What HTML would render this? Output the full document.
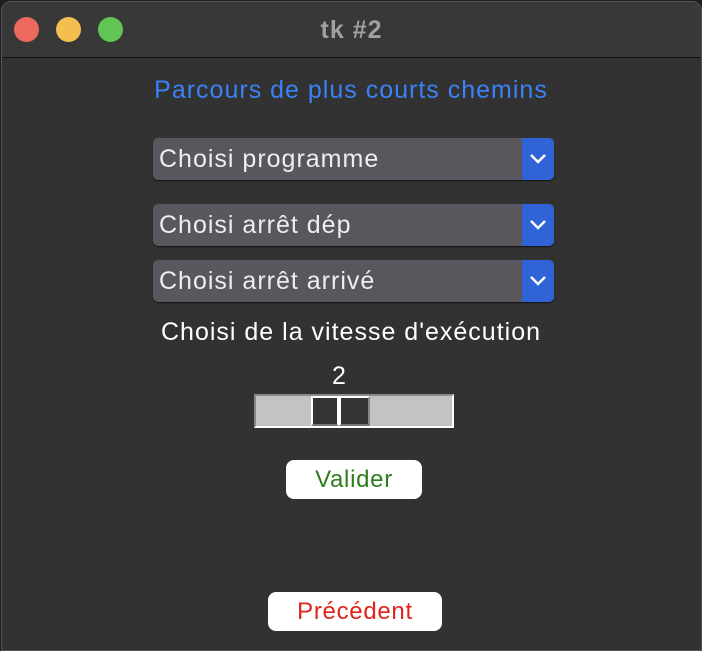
<!DOCTYPE html>
<html><head><style>
body{margin:0;width:702px;height:642px;background:#1e1e1e;font-family:"Liberation Sans",sans-serif;overflow:hidden;position:relative}
.win{position:absolute;left:1px;top:1px;width:701px;height:650px;background:#323232;border-radius:10px 10px 0 0;border:1px solid #555;box-sizing:border-box}
.tb{position:absolute;left:0;top:0;right:0;height:55px;background:#383838;border-bottom:1px solid #111;border-radius:10px 10px 0 0}
.dot{position:absolute;top:15px;width:25px;height:25px;border-radius:50%}
.t{position:absolute;color:#a0a0a0;font-weight:bold;font-size:25px;letter-spacing:1px;top:14px;left:0;right:0;text-align:center}
.a{position:absolute;text-align:center;left:0;right:0;font-size:25px;letter-spacing:1px}
.dd{position:absolute;left:153px;width:401px;height:42px;background:#59565e;border-radius:5px;color:#eee;font-size:25px;letter-spacing:1px;line-height:42px;box-shadow:0 1px 1px #111}
.dd span{margin-left:6px}
.dd b{position:absolute;right:0;top:0;width:32px;height:42px;background:#2f63d6;border-radius:0 5px 5px 0}
.dd svg{position:absolute;right:7px;top:14px}
.btn{position:absolute;background:#fff;border-radius:8px;text-align:center;font-size:24px;letter-spacing:0.7px}
</style></head><body>
<div class="win">
<div class="tb">
<div class="dot" style="left:12px;background:#ec6a5e"></div>
<div class="dot" style="left:54px;background:#f4bf4f"></div>
<div class="dot" style="left:96px;background:#61c554"></div>
<div class="t">tk #2</div>
</div>
</div>
<div class="a" style="top:76px;color:#3b82f6">Parcours de plus courts chemins</div>
<div class="dd" style="top:138px"><span>Choisi programme</span><b></b><svg width="18" height="14"><path d="M2 3l7 7 7-7" stroke="#fff" stroke-width="2.5" fill="none"/></svg></div>
<div class="dd" style="top:204px"><span>Choisi arrêt dép</span><b></b><svg width="18" height="14"><path d="M2 3l7 7 7-7" stroke="#fff" stroke-width="2.5" fill="none"/></svg></div>
<div class="dd" style="top:260px"><span>Choisi arrêt arrivé</span><b></b><svg width="18" height="14"><path d="M2 3l7 7 7-7" stroke="#fff" stroke-width="2.5" fill="none"/></svg></div>
<div class="a" style="top:318px;color:#fff">Choisi de la vitesse d'exécution</div>
<div style="position:absolute;left:332px;top:362px;color:#fff;font-size:25px">2</div>
<div style="position:absolute;left:254px;top:394px;width:200px;height:34px;box-sizing:border-box;background:#c3c3c3;border:2px solid #fff;border-top-color:#888;border-left-color:#888"></div>
<div style="position:absolute;left:311px;top:396px;width:28px;height:30px;box-sizing:border-box;background:#333;border:2px solid #fff;border-bottom-color:#777"></div>
<div style="position:absolute;left:339px;top:396px;width:31px;height:30px;box-sizing:border-box;background:#333;border:2px solid #fff;border-right-color:#888;border-bottom-color:#777"></div>
<div class="btn" style="left:286px;top:460px;width:136px;height:39px;line-height:39px;color:#2e7d1f">Valider</div>
<div class="btn" style="left:268px;top:592px;width:174px;height:39px;line-height:39px;color:#e0231c">Précédent</div>
</body></html>
